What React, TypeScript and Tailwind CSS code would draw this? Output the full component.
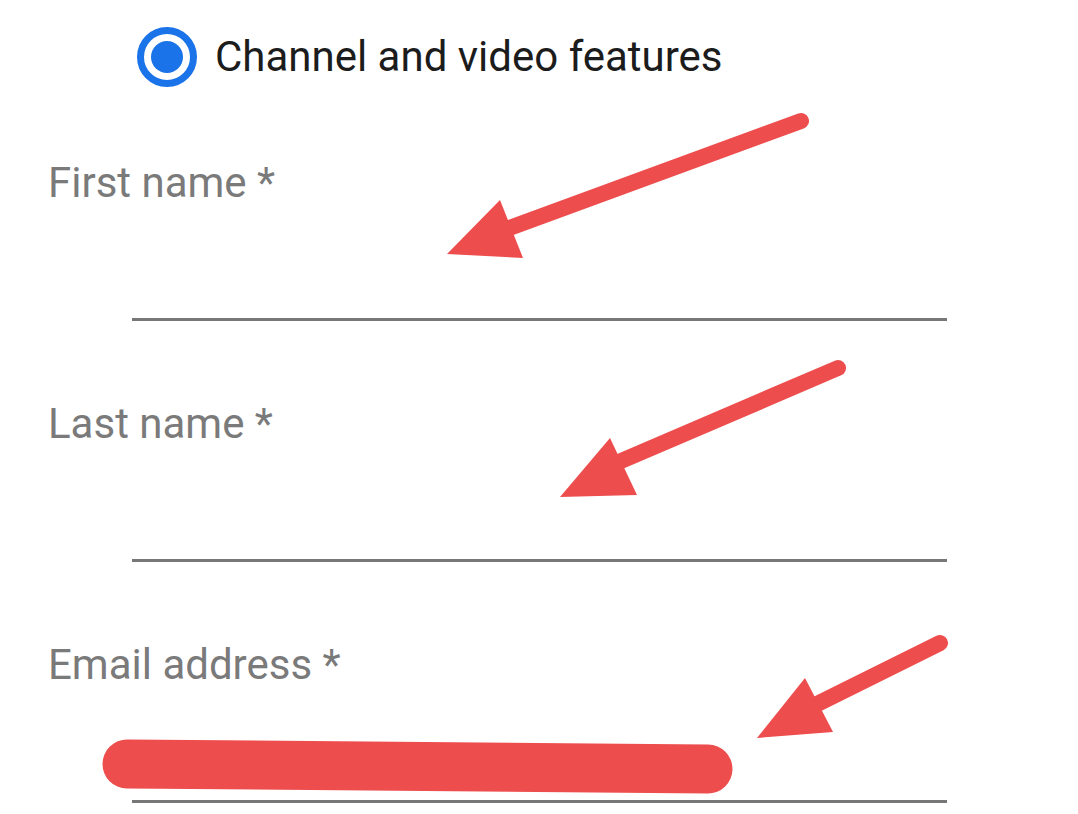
const fields = ['First name *', 'Last name *', 'Email address *']

function RadioDot() {
  return (
    <svg width="60" height="60" viewBox="0 0 60 60" className="shrink-0">
      <circle cx="30" cy="30" r="26.5" fill="none" stroke="#1a73e8" strokeWidth="7" />
      <circle cx="30" cy="30" r="16" fill="#1a73e8" />
    </svg>
  )
}

// red markup drawn over the form
function Markup() {
  const red = '#ee4d4d'
  return (
    <svg
      className="absolute inset-0 pointer-events-none"
      width="1078"
      height="814"
      viewBox="0 0 1078 814"
    >
      <line x1="801" y1="121" x2="490" y2="235" stroke={red} strokeWidth="16" strokeLinecap="round" />
      <polygon points="447,254 500,200 523,258" fill={red} />

      <line x1="838" y1="368" x2="600" y2="470" stroke={red} strokeWidth="16" strokeLinecap="round" />
      <polygon points="560,497 610,438 637,495" fill={red} />

      <line x1="940" y1="643" x2="795" y2="715" stroke={red} strokeWidth="16" strokeLinecap="round" />
      <polygon points="757,738 805,678 833,732" fill={red} />

      <line x1="127" y1="764" x2="708" y2="769" stroke={red} strokeWidth="49" strokeLinecap="round" />
    </svg>
  )
}

export default function App() {
  return (
    <div className="relative h-[814px] w-[1078px] overflow-hidden bg-white font-['Roboto',sans-serif]">
      <div className="flex items-center gap-[18px] pl-[137px] pt-[27px]">
        <RadioDot />
        <span className="text-[42px] leading-[42px] text-[#1c1c1c]">Channel and video features</span>
      </div>

      <div className="flex flex-col gap-[82px] pt-[75px]">
        {fields.map((label) => (
          <div key={label} className="flex flex-col">
            <p className="pl-[48px] text-[42px] leading-[42px] text-[#7a7a7a]">{label}</p>
            <div className="ml-[132px] h-[117px] w-[815px] border-b-[3px] border-[#777777]" />
          </div>
        ))}
      </div>

      <Markup />
    </div>
  )
}
